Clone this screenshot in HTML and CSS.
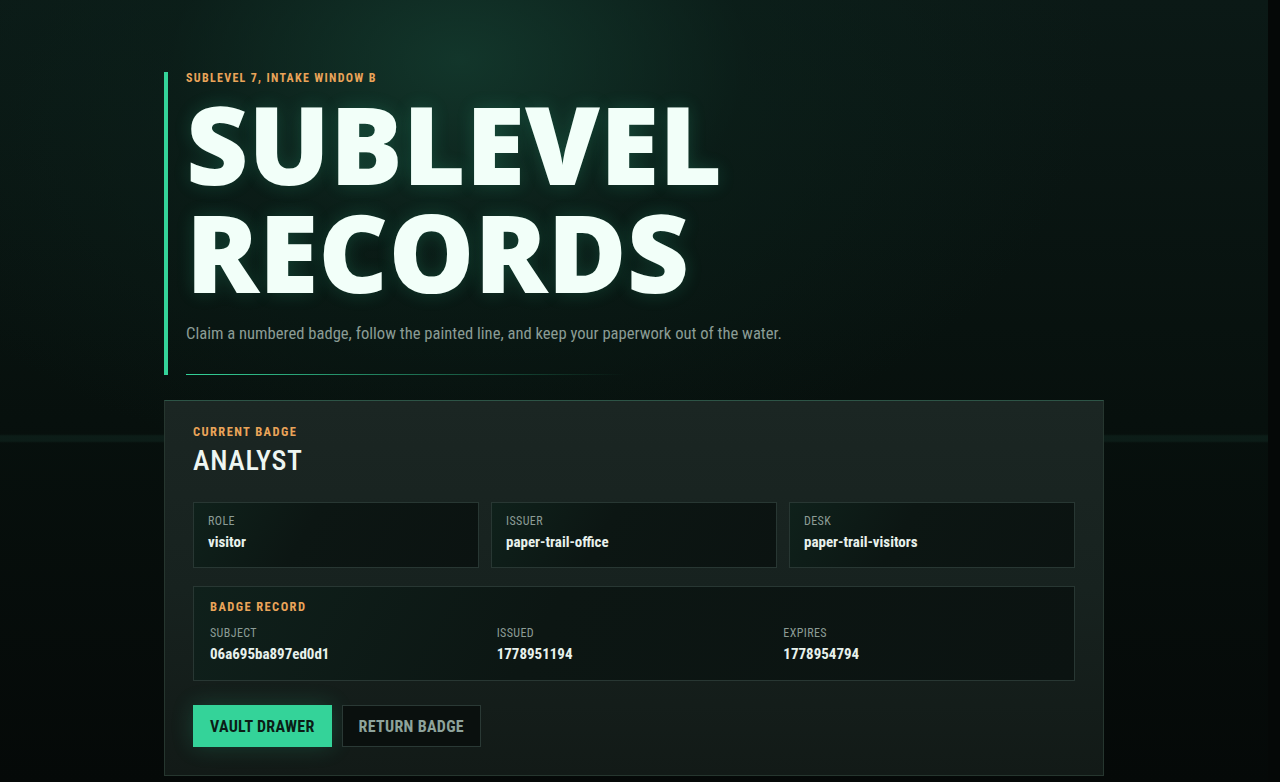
FILE: index.html
```html
<!DOCTYPE html>
<html lang="en">
<head>
<meta charset="utf-8">
<title>Sublevel Records</title>
<link rel="stylesheet" href="styles.css">
</head>
<body>
<main class="page">
  <header class="intro">
    <p class="eyebrow">Sublevel 7, intake window B</p>
    <h1 class="title">Sublevel<br>Records</h1>
    <p class="lede">Claim a numbered badge, follow the painted line, and keep your paperwork out of the water.</p>
    <div class="rule"></div>
  </header>

  <section class="badge-card">
    <p class="eyebrow eyebrow-card">Current badge</p>
    <h2 class="badge-name">Analyst</h2>

    <div class="facts">
      <div class="fact">
        <span class="label">Role</span>
        <span class="value">visitor</span>
      </div>
      <div class="fact">
        <span class="label">Issuer</span>
        <span class="value">paper-trail-office</span>
      </div>
      <div class="fact">
        <span class="label">Desk</span>
        <span class="value">paper-trail-visitors</span>
      </div>
    </div>

    <div class="record">
      <p class="eyebrow eyebrow-card">Badge record</p>
      <div class="record-grid">
        <div class="record-item">
          <span class="label">Subject</span>
          <span class="value">06a695ba897ed0d1</span>
        </div>
        <div class="record-item">
          <span class="label">Issued</span>
          <span class="value">1778951194</span>
        </div>
        <div class="record-item">
          <span class="label">Expires</span>
          <span class="value">1778954794</span>
        </div>
      </div>
    </div>

    <div class="actions">
      <button class="btn btn-primary" type="button">Vault drawer</button>
      <button class="btn btn-ghost" type="button">Return badge</button>
    </div>
  </section>
</main>
</body>
</html>
```

FILE: styles.css
```css
/* The outer strip on the right stays darker than the lit body */
html {
  background: #050807;
}

body {
  margin: 0 12px 0 0;
  min-height: 900px;
  font-family: "Roboto Condensed", "Roboto", sans-serif;
  color: #e6efea;
  background:
    linear-gradient(180deg, transparent 434px, rgba(26, 62, 52, 0.28) 436px, rgba(26, 62, 52, 0.28) 441px, transparent 443px),
    radial-gradient(ellipse 640px 420px at 460px 60px, rgba(21, 64, 50, 0.75), rgba(12, 36, 29, 0.45) 45%, rgba(6, 12, 10, 0) 100%),
    linear-gradient(180deg, #0b1916 0px, #07100d 420px, #050908 782px);
  background-repeat: no-repeat;
}

.page {
  width: 940px;
  margin: 0 auto;
  padding-top: 72px;
}

.eyebrow {
  margin: 0;
  font-size: 12px;
  line-height: 12px;
  font-weight: 700;
  letter-spacing: 1.3px;
  text-transform: uppercase;
  color: #eaa459;
}

.eyebrow-card {
  font-size: 12.5px;
  letter-spacing: 1.4px;
}

/* Intro block with the green rail on its left */
.intro {
  border-left: 4px solid #34d399;
  padding-left: 18px;
}

.title {
  margin: 6px 0 0;
  font-family: "Open Sans", sans-serif;
  font-weight: 800;
  font-size: 108px;
  line-height: 108px;
  text-transform: uppercase;
  color: #f2fff9;
  text-shadow: 0 0 18px rgba(52, 211, 153, 0.2);
}

.lede {
  margin: 15px 0 0;
  font-size: 16.6px;
  line-height: 26px;
  color: #8b9c95;
}

.rule {
  margin-top: 27px;
  width: 440px;
  height: 1px;
  background: linear-gradient(90deg, #34d399 0%, rgba(52, 211, 153, 0.55) 45%, rgba(52, 211, 153, 0) 100%);
}

/* Badge card */
.badge-card {
  margin-top: 25px;
  border: 1px solid #26362f;
  border-top-color: #2d5446;
  background: linear-gradient(180deg, #1b2623 0%, #17221f 50%, #121a17 100%);
  padding: 25px 28px 28px;
}

.badge-name {
  margin: 7px 0 0;
  font-size: 28px;
  line-height: 32px;
  font-weight: 500;
  letter-spacing: 0.7px;
  text-transform: uppercase;
  color: #eef6f2;
}

.facts {
  margin-top: 25px;
  display: grid;
  grid-template-columns: repeat(3, 1fr);
  gap: 12px;
}

.fact {
  display: flex;
  flex-direction: column;
  gap: 5px;
  padding: 11px 14px 15px;
  border: 1px solid #283733;
  background: linear-gradient(120deg, #0f211b 0%, #0c1613 40%, #0b1311 100%);
}

.label {
  font-size: 12px;
  line-height: 14px;
  letter-spacing: 0.4px;
  text-transform: uppercase;
  color: #8c9c96;
}

.value {
  font-size: 15px;
  line-height: 19px;
  font-weight: 700;
  color: #e8f1ec;
}

.record {
  margin-top: 18px;
  padding: 14px 16px 16px;
  border: 1px solid #283733;
  background: linear-gradient(120deg, #0f201b 0%, #0c1613 40%, #0b1311 100%);
}

.record-grid {
  margin-top: 13px;
  display: grid;
  grid-template-columns: repeat(3, 1fr);
  gap: 12px;
}

.record-item {
  display: flex;
  flex-direction: column;
  gap: 5px;
}

.actions {
  margin-top: 24px;
  display: flex;
  gap: 10px;
}

.btn {
  height: 42px;
  padding: 0 16px;
  font-family: inherit;
  font-size: 16px;
  font-weight: 700;
  letter-spacing: 0.3px;
  text-transform: uppercase;
  cursor: pointer;
}

.btn-primary {
  border: 1px solid #34d399;
  background: #34d399;
  color: #0b1d16;
  box-shadow: 0 0 22px rgba(52, 211, 153, 0.2);
}

.btn-ghost {
  border: 1px solid #2a3935;
  background: #0a100e;
  color: #8ea39b;
}
```
